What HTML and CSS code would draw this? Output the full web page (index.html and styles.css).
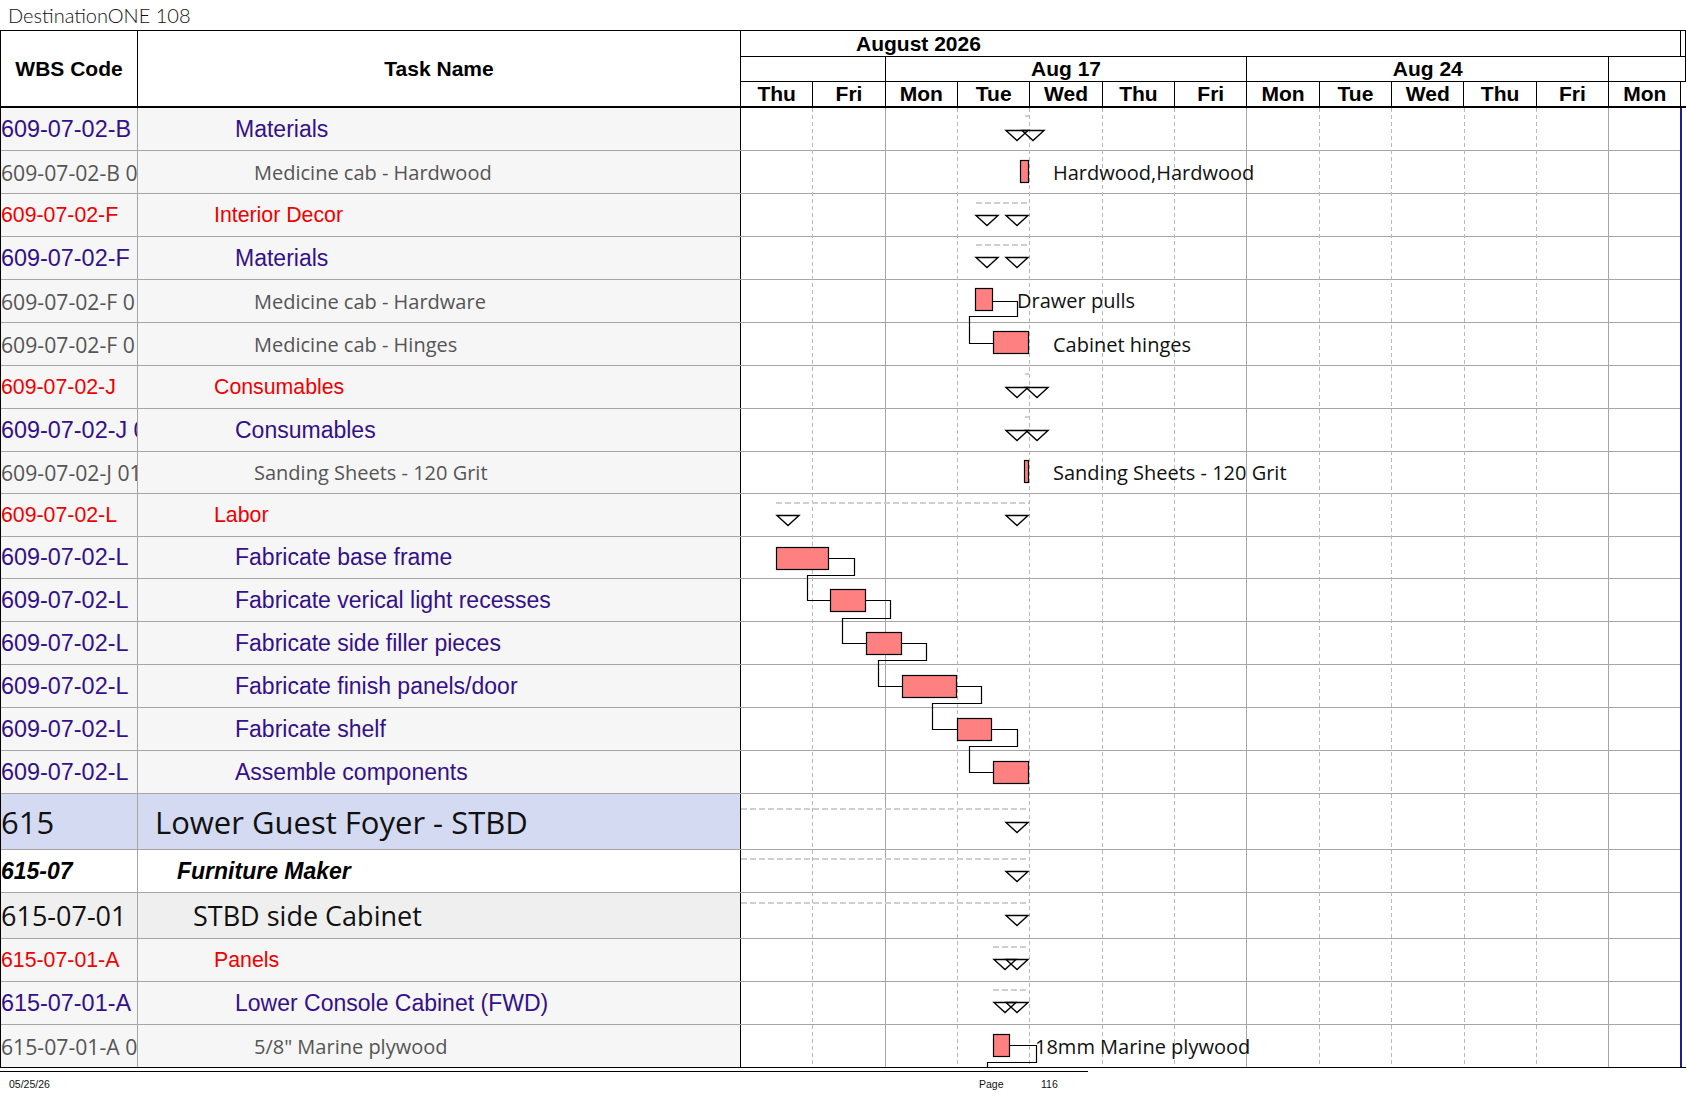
FILE: index.html
```html
<!DOCTYPE html>
<html>
<head>
<meta charset="utf-8">
<title>DestinationONE 108</title>
<link rel="stylesheet" href="styles.css">
</head>
<body>
<div class="title">DestinationONE 108</div>
<div class="sheet">
  <div class="head">
    <div class="h-wbs">WBS Code</div>
    <div class="h-task">Task Name</div>
    <div class="g-head">
      <div class="g-row g-month"><div class="m-cell">August 2026</div><div></div></div>
      <div class="g-row g-weeks"><div class="w-cell w2"></div><div class="w-cell w5">Aug 17</div><div class="w-cell w5">Aug 24</div><div class="w-last"></div></div>
      <div class="g-row g-days">
        <div class="d">Thu</div><div class="d">Fri</div><div class="d">Mon</div><div class="d">Tue</div><div class="d">Wed</div><div class="d">Thu</div><div class="d">Fri</div><div class="d">Mon</div><div class="d">Tue</div><div class="d">Wed</div><div class="d">Thu</div><div class="d">Fri</div><div class="d">Mon</div><div></div>
      </div>
    </div>
  </div>
  <div class="body">
    <div class="rows">
      <div class="r h43 purple"><div class="wbs"><span>609-07-02-B</span></div><div class="task l5">Materials</div></div>
      <div class="r h43 gray"><div class="wbs"><span>609-07-02-B 0</span></div><div class="task l6">Medicine cab - Hardwood</div></div>
      <div class="r h43 red"><div class="wbs"><span>609-07-02-F</span></div><div class="task l4">Interior Decor</div></div>
      <div class="r h43 purple"><div class="wbs"><span>609-07-02-F</span></div><div class="task l5">Materials</div></div>
      <div class="r h43 gray"><div class="wbs"><span>609-07-02-F 0</span></div><div class="task l6">Medicine cab - Hardware</div></div>
      <div class="r h43 gray"><div class="wbs"><span>609-07-02-F 0</span></div><div class="task l6">Medicine cab - Hinges</div></div>
      <div class="r h43 red"><div class="wbs"><span>609-07-02-J</span></div><div class="task l4">Consumables</div></div>
      <div class="r h43 purple"><div class="wbs"><span>609-07-02-J 0</span></div><div class="task l5">Consumables</div></div>
      <div class="r h42 gray"><div class="wbs"><span>609-07-02-J 01</span></div><div class="task l6">Sanding Sheets - 120 Grit</div></div>
      <div class="r h43 red"><div class="wbs"><span>609-07-02-L</span></div><div class="task l4">Labor</div></div>
      <div class="r h42 purple"><div class="wbs"><span>609-07-02-L</span></div><div class="task l5">Fabricate base frame</div></div>
      <div class="r h43 purple"><div class="wbs"><span>609-07-02-L</span></div><div class="task l5">Fabricate verical light recesses</div></div>
      <div class="r h43 purple"><div class="wbs"><span>609-07-02-L</span></div><div class="task l5">Fabricate side filler pieces</div></div>
      <div class="r h43 purple"><div class="wbs"><span>609-07-02-L</span></div><div class="task l5">Fabricate finish panels/door</div></div>
      <div class="r h43 purple"><div class="wbs"><span>609-07-02-L</span></div><div class="task l5">Fabricate shelf</div></div>
      <div class="r h43 purple"><div class="wbs"><span>609-07-02-L</span></div><div class="task l5">Assemble components</div></div>
      <div class="r h56 big"><div class="wbs"><span>615</span></div><div class="task l1">Lower Guest Foyer - STBD</div></div>
      <div class="r h43 fm"><div class="wbs"><span>615-07</span></div><div class="task l2">Furniture Maker</div></div>
      <div class="r h46 stbd"><div class="wbs"><span>615-07-01</span></div><div class="task l3">STBD side Cabinet</div></div>
      <div class="r h43 red"><div class="wbs"><span>615-07-01-A</span></div><div class="task l4">Panels</div></div>
      <div class="r h43 purple"><div class="wbs"><span>615-07-01-A</span></div><div class="task l5">Lower Console Cabinet (FWD)</div></div>
      <div class="r h42 gray last"><div class="wbs"><span>615-07-01-A 0</span></div><div class="task l6">5/8" Marine plywood</div></div>
    </div>
    <svg class="chart" width="945" height="959" viewBox="741 108 945 959" xmlns="http://www.w3.org/2000/svg">
      <g class="hl">
        <line x1="741" x2="1681" y1="150.5" y2="150.5"/>
        <line x1="741" x2="1681" y1="193.5" y2="193.5"/>
        <line x1="741" x2="1681" y1="236.5" y2="236.5"/>
        <line x1="741" x2="1681" y1="279.5" y2="279.5"/>
        <line x1="741" x2="1681" y1="322.5" y2="322.5"/>
        <line x1="741" x2="1681" y1="365.5" y2="365.5"/>
        <line x1="741" x2="1681" y1="408.5" y2="408.5"/>
        <line x1="741" x2="1681" y1="451.5" y2="451.5"/>
        <line x1="741" x2="1681" y1="493.5" y2="493.5"/>
        <line x1="741" x2="1681" y1="536.5" y2="536.5"/>
        <line x1="741" x2="1681" y1="578.5" y2="578.5"/>
        <line x1="741" x2="1681" y1="621.5" y2="621.5"/>
        <line x1="741" x2="1681" y1="664.5" y2="664.5"/>
        <line x1="741" x2="1681" y1="707.5" y2="707.5"/>
        <line x1="741" x2="1681" y1="750.5" y2="750.5"/>
        <line x1="741" x2="1681" y1="793.5" y2="793.5"/>
        <line x1="741" x2="1681" y1="849.5" y2="849.5"/>
        <line x1="741" x2="1681" y1="892.5" y2="892.5"/>
        <line x1="741" x2="1681" y1="938.5" y2="938.5"/>
        <line x1="741" x2="1681" y1="981.5" y2="981.5"/>
        <line x1="741" x2="1681" y1="1024.5" y2="1024.5"/>
      </g>
      <g class="vd">
        <line x1="812.85" x2="812.85" y1="108" y2="1067"/>
        <line x1="957.55" x2="957.55" y1="108" y2="1067"/>
        <line x1="1029.9" x2="1029.9" y1="108" y2="1067"/>
        <line x1="1102.25" x2="1102.25" y1="108" y2="1067"/>
        <line x1="1174.6" x2="1174.6" y1="108" y2="1067"/>
        <line x1="1319.3" x2="1319.3" y1="108" y2="1067"/>
        <line x1="1391.65" x2="1391.65" y1="108" y2="1067"/>
        <line x1="1464" x2="1464" y1="108" y2="1067"/>
        <line x1="1536.35" x2="1536.35" y1="108" y2="1067"/>
      </g>
      <g class="vs">
        <line x1="885.2" x2="885.2" y1="108" y2="1067"/>
        <line x1="1246.95" x2="1246.95" y1="108" y2="1067"/>
        <line x1="1608.7" x2="1608.7" y1="108" y2="1067"/>
      </g>
      <line class="vb" x1="1681.05" x2="1681.05" y1="108" y2="1067"/>
      <g class="sum">
        <line x1="1025" x2="1029" y1="116" y2="116"/>
        <line x1="976" x2="1029" y1="203" y2="203"/>
        <line x1="976" x2="1029" y1="245" y2="245"/>
        <line x1="1025" x2="1029" y1="374" y2="374"/>
        <line x1="1025" x2="1029" y1="417" y2="417"/>
        <line x1="776" x2="1029" y1="503" y2="503"/>
        <line x1="741" x2="1029" y1="809" y2="809"/>
        <line x1="741" x2="1029" y1="859" y2="859"/>
        <line x1="741" x2="1029" y1="903" y2="903"/>
        <line x1="993" x2="1029" y1="947" y2="947"/>
        <line x1="993" x2="1029" y1="990" y2="990"/>
      </g>
      <g class="link">
        <polyline points="993,301.5 1017.5,301.5 1017.5,316.5 969.5,316.5 969.5,343.5 993,343.5"/>
        <polyline points="829,558.5 854.5,558.5 854.5,575.5 807.5,575.5 807.5,600.5 830,600.5"/>
        <polyline points="866,600.5 890.5,600.5 890.5,618.5 842.5,618.5 842.5,643.5 866,643.5"/>
        <polyline points="902,643.5 926.5,643.5 926.5,660.5 878.5,660.5 878.5,686.5 902,686.5"/>
        <polyline points="957,686.5 981.5,686.5 981.5,703.5 932.5,703.5 932.5,729.5 957,729.5"/>
        <polyline points="992,729.5 1017.5,729.5 1017.5,746.5 969.5,746.5 969.5,772.5 993,772.5"/>
        <polyline points="1010,1045.5 1036.5,1045.5 1036.5,1062.5 987.5,1062.5 987.5,1067"/>
      </g>
      <g class="bar">
        <rect x="1020.5" y="160.5" width="8" height="22"/>
        <rect x="975.5" y="288.5" width="17" height="22"/>
        <rect x="993.5" y="331.5" width="35" height="22"/>
        <rect x="1024.5" y="460.5" width="4" height="22"/>
        <rect x="776.5" y="547.5" width="52" height="22"/>
        <rect x="830.5" y="589.5" width="35" height="22"/>
        <rect x="866.5" y="632.5" width="35" height="22"/>
        <rect x="902.5" y="675.5" width="54" height="22"/>
        <rect x="957.5" y="718.5" width="34" height="22"/>
        <rect x="993.5" y="761.5" width="35" height="22"/>
        <rect x="993.5" y="1034.5" width="16" height="22"/>
      </g>
      <g class="tri">
        <polygon points="1006,130.5 1028,130.5 1017,140.5"/>
        <polygon points="1022,130.5 1044,130.5 1033,140.5"/>
        <polygon points="976,215.5 998,215.5 987,225.5"/>
        <polygon points="1006,215.5 1028,215.5 1017,225.5"/>
        <polygon points="976,257.5 998,257.5 987,267.5"/>
        <polygon points="1006,257.5 1028,257.5 1017,267.5"/>
        <polygon points="1006,387.5 1028,387.5 1017,397.5"/>
        <polygon points="1026,387.5 1048,387.5 1037,397.5"/>
        <polygon points="1006,430.5 1028,430.5 1017,440.5"/>
        <polygon points="1026,430.5 1048,430.5 1037,440.5"/>
        <polygon points="777,515.5 799,515.5 788,525.5"/>
        <polygon points="1006,515.5 1028,515.5 1017,525.5"/>
        <polygon points="1006,822.5 1028,822.5 1017,832.5"/>
        <polygon points="1006,871.5 1028,871.5 1017,881.5"/>
        <polygon points="1006,915.5 1028,915.5 1017,925.5"/>
        <polygon points="994,959.5 1016,959.5 1005,969.5"/>
        <polygon points="1006,959.5 1028,959.5 1017,969.5"/>
        <polygon points="994,1002.5 1016,1002.5 1005,1012.5"/>
        <polygon points="1006,1002.5 1028,1002.5 1017,1012.5"/>
      </g>
      <g class="lbl">
        <text x="1053" y="180">Hardwood,Hardwood</text>
        <text x="1017" y="308">Drawer pulls</text>
        <text x="1053" y="352">Cabinet hinges</text>
        <text x="1053" y="480">Sanding Sheets - 120 Grit</text>
        <text x="1035" y="1054">18mm Marine plywood</text>
      </g>
    </svg>
  </div>
</div>
<div class="footer"><span class="f-date">05/25/26</span><span class="f-page">Page</span><span>116</span></div>
</body>
</html>
```
FILE: styles.css
```css
* { box-sizing: border-box; }
body {
  margin: 0;
  background: #fff;
  color: #000;
  font-family: "Liberation Sans", Arial, sans-serif;
}
.title {
  height: 30px;
  line-height: 30px;
  padding-left: 8px;
  font-family: Lato, "Open Sans", sans-serif;
  font-weight: 300;
  font-size: 20px;
  color: #111;
}
.sheet {
  width: 1686px;
  border-top: 1px solid #000;
  border-left: 1px solid #000;
  border-bottom: 1px solid #000;
}
.head { display: flex; height: 77px; }
.h-wbs, .h-task {
  display: flex;
  align-items: center;
  justify-content: center;
  font-weight: 700;
  font-size: 21px;
  border-right: 1px solid #000;
  border-bottom: 2px solid #000;
}
.h-wbs { width: 137px; }
.h-task { width: 603px; }
.g-head { width: 945px; display: flex; flex-direction: column; }
.g-row {
  display: grid;
  grid-template-columns: repeat(13, 72.35px) 1fr;
  font-weight: 700;
  font-size: 21px;
}
.g-month { height: 26px; border-bottom: 1px solid #000; border-right: 1px solid #000; }
.m-cell {
  grid-column: span 13;
  border-right: 1px solid #000;
  padding-left: 115px;
  line-height: 25px;
}
.g-weeks { height: 25px; border-bottom: 1px solid #000; border-right: 1px solid #000; }
.w-cell {
  border-right: 1px solid #000;
  text-align: center;
  line-height: 24px;
}
.w2 { grid-column: span 2; }
.w5 { grid-column: span 5; }
.w-last { grid-column: span 2; }
.g-days { height: 26px; border-bottom: 2px solid #000; }
.d {
  border-right: 1px solid #000;
  text-align: center;
  line-height: 24px;
}
.body { display: flex; }
.rows { width: 740px; }
.chart { display: block; }
.r {
  display: flex;
  border-bottom: 1px solid #a6a6a6;
  background: #f6f6f6;
}
.r.last { border-bottom: none; }
.h42 { height: 42px; }
.h43 { height: 43px; }
.h46 { height: 46px; }
.h56 { height: 56px; }
.wbs {
  width: 137px;
  border-right: 1px solid #a6a6a6;
  overflow: hidden;
  white-space: nowrap;
  display: flex;
  align-items: center;
}
.task {
  width: 603px;
  border-right: 1px solid #000;
  overflow: hidden;
  white-space: nowrap;
  display: flex;
  align-items: center;
}
.l1 { padding-left: 17px; }
.l2 { padding-left: 39px; }
.l3 { padding-left: 55px; }
.l4 { padding-left: 76px; }
.l5 { padding-left: 97px; }
.l6 { padding-left: 116px; }
.purple { color: #34108a; font-size: 23px; }
.purple .wbs { font-size: 23.4px; }
.red { color: #f00000; font-size: 21.3px; }
.gray { color: #555; font-family: "Open Sans", sans-serif; font-size: 20px; }
.gray .wbs { font-size: 21.2px; }
.big { color: #111; font-family: "Open Sans", sans-serif; font-size: 31px; background: #d3daf1; }
.fm { font-style: italic; font-weight: 700; font-size: 23px; background: #fff; }
.stbd { color: #111; font-family: "Open Sans", sans-serif; font-size: 27px; background: #efefef; }

.hl line { stroke: #a6a6a6; stroke-width: 1; shape-rendering: crispEdges; }
.vd line { stroke: #b8b8b8; stroke-width: 1; stroke-dasharray: 4 3; shape-rendering: crispEdges; }
.vs line { stroke: #a6a6a6; stroke-width: 1; shape-rendering: crispEdges; }
.vb { stroke: #1f1f8a; stroke-width: 1.2; shape-rendering: crispEdges; }
.sum line { stroke: #cfcfcf; stroke-width: 2; stroke-dasharray: 6 3; }
.link polyline { fill: none; stroke: #000; stroke-width: 1.2; }
.bar rect { fill: #ff8080; stroke: #000; stroke-width: 1.2; }
.tri polygon { fill: none; stroke: #000; stroke-width: 1.4; stroke-linejoin: miter; }
.lbl text { font-family: "Open Sans", sans-serif; font-size: 20px; fill: #111; }

.footer {
  width: 1088px;
  margin-top: 3px;
  border-top: 1px solid #000;
  display: flex;
  padding-top: 6px;
  font-size: 10.5px;
  line-height: 12px;
  color: #111;
}
.f-date { width: 979px; padding-left: 9px; }
.f-page { width: 62px; }
```
